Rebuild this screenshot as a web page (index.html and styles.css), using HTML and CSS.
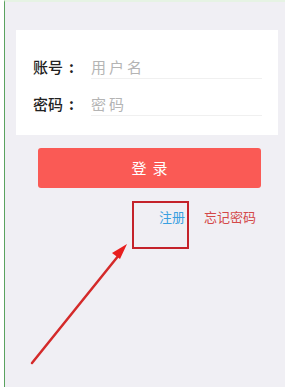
FILE: index.html
```html
<!DOCTYPE html>
<html lang="zh-CN">
<head>
    <meta charset="UTF-8">
    <link rel="stylesheet" href="styles.css">
</head>
<body>
<div class="page">
    <div class="login">
        <div class="card">
            <div class="row">
                <label>账号<i>:</i></label>
                <span class="field">用户名</span>
            </div>
            <div class="row">
                <label>密码<i>:</i></label>
                <span class="field">密码</span>
            </div>
        </div>
        <div class="btn">登录</div>
        <div class="links">
            <a class="reg">注册</a>
            <a class="forget">忘记密码</a>
        </div>
    </div>
    <!-- 标注 -->
    <div class="mark"></div>
    <svg class="arrow" width="285" height="387" viewBox="0 0 285 387">
        <line x1="32" y1="363" x2="119" y2="255" stroke="#d42a2a" stroke-width="2.5" stroke-linecap="round"/>
        <polygon points="127,244 112,253 120,259" fill="#e81e1e"/>
    </svg>
</div>
</body>
</html>
```

FILE: styles.css
```css
* {
    margin: 0;
    padding: 0;
    box-sizing: border-box;
}

body {
    background: #fff;
    font-family: "Noto Sans CJK SC", "Noto Sans", sans-serif;
}

.page {
    position: relative;
    width: 285px;
    height: 387px;
    padding-left: 4px;
    overflow: hidden;
}

.login {
    height: 100%;
    background: #f0eff4;
    border-left: 1px solid #5aa25f;
    border-top: 2px solid #e6f3e4;
    padding-top: 28px;
}

.card {
    margin: 0 7px 0 11px;
    height: 105px;
    background: #fff;
    padding: 18px 16px 0 17px;
}

.row {
    display: flex;
    align-items: center;
    height: 37px;
}

.row label {
    width: 58px;
    font-size: 15px;
    font-weight: 500;
    color: #222;
}

.row label i {
    font-style: normal;
    font-weight: 700;
    margin-left: 6px;
}

.field {
    flex: 1;
    height: 22px;
    line-height: 20px;
    font-size: 15px;
    color: #b4b4b4;
    border-bottom: 1px solid #f0f0f0;
    letter-spacing: 3px;
    margin-top: 2px;
}

.btn {
    margin: 13px 24px 0 33px;
    height: 40px;
    line-height: 40px;
    background: #fa5a55;
    border-radius: 3px;
    color: #fff;
    text-align: center;
    font-size: 15px;
    letter-spacing: 6px;
    padding-left: 6px;
}

.links {
    display: flex;
    justify-content: flex-end;
    gap: 19px;
    padding-right: 29px;
    margin-top: 19px;
    font-size: 13px;
}

.reg {
    color: #3aa0e0;
}

.forget {
    color: #d44848;
}

.mark {
    position: absolute;
    left: 132px;
    top: 201px;
    width: 57px;
    height: 48px;
    border: 2px solid #c4222a;
}

.arrow {
    position: absolute;
    left: 0;
    top: 0;
}
```
